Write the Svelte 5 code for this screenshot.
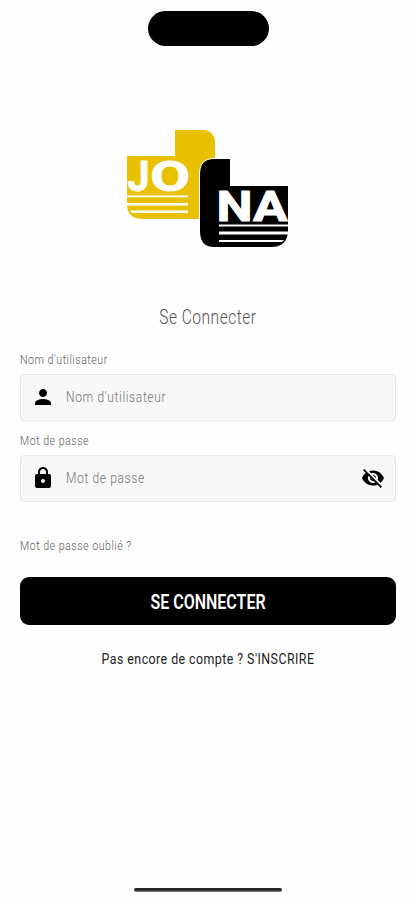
<script>
	let username = $state('');
	let password = $state('');
	let showPassword = $state(false);
</script>

<main class="screen">
	<div class="island"></div>

	<svg class="logo" viewBox="0 0 164 120" width="164" height="120" role="img" aria-label="JONA">
		<path fill="#eac102" d="M1 27H49V1H76Q89 1 89 15V90H17Q1 90 1 75Z" />
		<g fill="#fff" stroke="#fff">
			<text x="1.500" y="62" font-size="43" textLength="22" lengthAdjust="spacingAndGlyphs">J</text>
			<text x="24" y="62" font-size="43" textLength="40" lengthAdjust="spacingAndGlyphs">O</text>
		</g>
		<path fill="#fff" d="M1 66.500h61v1.800H1zM1 74h61v2.600H1zM4 81.500h58v2.600H6z" />
		<path fill="#fff" d="M73 90V44Q74 29 88 29h2v61z" />
		<path fill="#000" d="M74 45Q74 30 88 30H104V57H162V101Q162 118 145 118H88Q74 118 74 102Z" />
		<g fill="#fff" stroke="#fff">
			<text x="90.500" y="92" font-size="42" textLength="36" lengthAdjust="spacingAndGlyphs">N</text>
			<text x="127" y="92" font-size="42" textLength="34.500" lengthAdjust="spacingAndGlyphs">A</text>
		</g>
		<path fill="#fff" d="M93 95.500h69v2H93zM93 102.500h69v3H93zM93 111h65l-2 2H93z" />
	</svg>

	<h1><span>Se Connecter</span></h1>

	<form onsubmit={(e) => e.preventDefault()}>
		<label for="username"><span>Nom d'utilisateur</span></label>
		<div class="field">
			<svg class="icon" viewBox="0 0 24 24">
				<path d="M12 12c2.210 0 4-1.790 4-4s-1.790-4-4-4-4 1.790-4 4 1.790 4 4 4zm0 2c-2.670 0-8 1.340-8 4v2h16v-2c0-2.660-5.330-4-8-4z" />
			</svg>
			<input id="username" type="text" placeholder="Nom d'utilisateur" bind:value={username} />
		</div>

		<label for="password"><span>Mot de passe</span></label>
		<div class="field">
			<svg class="icon" viewBox="0 0 24 24">
				<path d="M18 8h-1V6c0-2.760-2.240-5-5-5S7 3.240 7 6v2H6c-1.100 0-2 .9-2 2v10c0 1.100.9 2 2 2h12c1.100 0 2-.9 2-2V10c0-1.100-.9-2-2-2zm-6 9c-1.100 0-2-.9-2-2s.9-2 2-2 2 .9 2 2-.9 2-2 2zm3.100-9H8.900V6c0-1.710 1.390-3.100 3.100-3.100s3.100 1.390 3.100 3.100v2z" />
			</svg>
			<input
				id="password"
				type={showPassword ? 'text' : 'password'}
				placeholder="Mot de passe"
				bind:value={password}
			/>
			<button
				class="toggle"
				type="button"
				aria-label="Afficher le mot de passe"
				onclick={() => (showPassword = !showPassword)}
			>
				<svg class="icon" viewBox="0 0 24 24">
					<path d="M12 7c2.760 0 5 2.240 5 5 0 .65-.13 1.260-.36 1.830l2.920 2.920c1.510-1.260 2.700-2.890 3.430-4.750-1.730-4.390-6-7.500-11-7.500-1.400 0-2.740.25-3.980.7l2.160 2.160C10.740 7.130 11.350 7 12 7zM2 4.270l2.280 2.280.46.46C3.080 8.300 1.780 10.020 1 12c1.730 4.390 6 7.500 11 7.500 1.550 0 3.030-.3 4.380-.84l.42.42L19.730 22 21 20.730 3.270 3 2 4.270zM7.530 9.800l1.550 1.550c-.05.21-.08.43-.08.65 0 1.660 1.340 3 3 3 .22 0 .44-.03.65-.08l1.550 1.550c-.67.33-1.410.53-2.200.53-2.760 0-5-2.240-5-5 0-.79.2-1.530.53-2.200zm4.310-.78l3.150 3.150.02-.16c0-1.660-1.340-3-3-3l-.17.01z" />
				</svg>
			</button>
		</div>

		<a class="forgot" href="#forgot"><span>Mot de passe oublié ?</span></a>

		<button class="submit" type="submit"><span>SE CONNECTER</span></button>
	</form>

	<p class="signup"><span>Pas encore de compte ? S'INSCRIRE</span></p>

	<div class="home-bar"></div>
</main>

<style>
	:global(body) {
		background: #fefefe;
	}

	.screen {
		box-sizing: border-box;
		width: 100%;
		height: 900px;
		padding: 11px 19px 8px 20px;
		display: flex;
		flex-direction: column;
		font-family: Roboto, 'Liberation Sans', sans-serif;
		background: #fefefe;
	}

	.island {
		width: 121px;
		height: 35px;
		align-self: center;
		border-radius: 18px;
		background: #000;
		flex-shrink: 0;
	}

	.logo {
		display: block;
		align-self: center;
		margin-top: 83px;
		flex-shrink: 0;
	}

	.logo text {
		font-family: Roboto, sans-serif;
		font-weight: 700;
		stroke-linejoin: round;
	}

	h1 {
		margin: 57px 0 0;
		height: 24px;
		font-size: 19.5px;
		line-height: 24px;
		font-weight: 300;
		text-align: center;
		color: #555;
	}

	h1 span,
	label span,
	.forgot span,
	.submit span,
	.signup span {
		display: inline-block;
		white-space: nowrap;
	}

	h1 span {
		letter-spacing: 0.6px;
		transform: scaleX(0.8);
	}

	form {
		display: flex;
		flex-direction: column;
		margin-top: 23px;
	}

	label,
	.forgot {
		height: 14px;
		font-size: 12.5px;
		line-height: 14px;
		font-weight: 300;
		color: #5c5c5c;
		text-decoration: none;
	}

	label span,
	.forgot span {
		letter-spacing: 0.6px;
		transform: scaleX(0.85);
		transform-origin: left;
	}

	.field {
		box-sizing: border-box;
		height: 47px;
		margin: 7px 0 13px;
		padding: 0 10px 1px;
		display: flex;
		align-items: center;
		border: 1px solid #e6e6e6;
		border-radius: 4px;
		background: #f7f7f7;
	}

	.icon {
		display: block;
		width: 24px;
		height: 24px;
		fill: #000;
		flex-shrink: 0;
	}

	input {
		flex: 1;
		min-width: 0;
		height: 40px;
		margin-left: 11px;
		padding: 1px 0 0;
		border: none;
		outline: none;
		background: transparent;
		font-family: inherit;
		font-size: 14.5px;
		font-weight: 300;
		letter-spacing: 0.75px;
		transform: scaleX(0.83);
		transform-origin: left;
	}

	input::placeholder {
		color: #757575;
		opacity: 1;
	}

	.toggle {
		padding: 0;
		border: none;
		background: none;
	}

	.forgot {
		margin-top: 24px;
	}

	.submit {
		height: 48px;
		margin-top: 24px;
		padding: 1px 0 0;
		border: none;
		border-radius: 9px;
		background: #000;
		color: #fff;
		font-family: inherit;
		font-size: 20px;
		font-weight: 600;
	}

	.submit span {
		transform: scaleX(0.8);
	}

	.signup {
		margin: 24px 0 0;
		height: 20px;
		font-size: 15.5px;
		line-height: 20px;
		text-align: center;
		color: #222;
	}

	.signup span {
		letter-spacing: 0.55px;
		transform: scaleX(0.8);
	}

	.home-bar {
		width: 148px;
		height: 4px;
		margin-top: auto;
		align-self: center;
		border-radius: 2px;
		background: linear-gradient(#242424 55%, #999);
	}
</style>
